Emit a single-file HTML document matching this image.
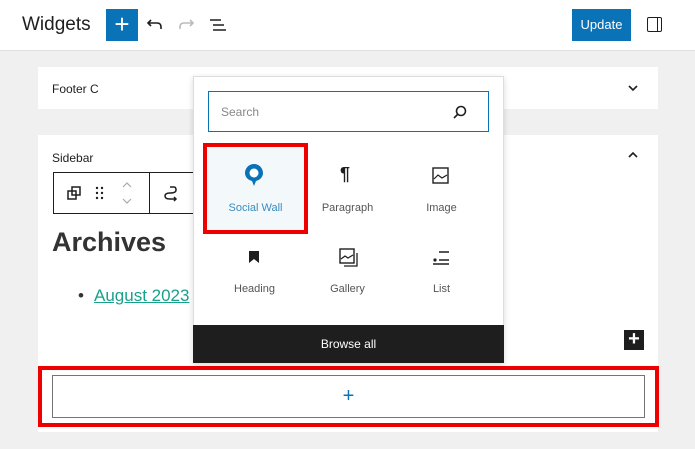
<!DOCTYPE html>
<html><head><style>
*{box-sizing:border-box;margin:0;padding:0}
body{width:695px;height:449px;background:#f0f0f0;font-family:"Liberation Sans",sans-serif;position:relative;overflow:hidden;color:#1e1e1e}
.a{position:absolute}
</style></head><body>
<div class="a" style="left:0;top:0;width:695px;height:51px;background:#fff;border-bottom:1px solid #e0e0e0"></div>
<div class="a" style="left:22px;top:14px;font-size:19px;">Widgets</div>
<div class="a" style="left:106px;top:9px;width:32px;height:32px;background:#0a72b7;color:#fff;font-size:26px;text-align:center;line-height:31px">+</div>
<svg class="a" style="left:145px;top:15px" width="20" height="20" viewBox="0 0 20 20"><path d="M6 5 L3 8 L6 11 M3 8 H12 Q16 8 16 12 V14" fill="none" stroke="#1e1e1e" stroke-width="1.6"/></svg>
<svg class="a" style="left:176px;top:15px" width="20" height="20" viewBox="0 0 20 20"><path d="M14 5 L17 8 L14 11 M17 8 H8 Q4 8 4 12 V14" fill="none" stroke="#bbb" stroke-width="1.6"/></svg>
<svg class="a" style="left:208px;top:15px" width="20" height="20" viewBox="0 0 20 20"><path d="M2 5H13M5 10H16M5 15H18" stroke="#1e1e1e" stroke-width="1.6"/></svg>
<div class="a" style="left:572px;top:9px;width:59px;height:32px;background:#0a72b7;color:#fff;font-size:13px;text-align:center;line-height:32px">Update</div>
<div class="a" style="left:647px;top:17px;width:15px;height:15px;border:1.5px solid #1e1e1e;border-radius:2px"><div style="position:absolute;right:3px;top:0;bottom:0;border-left:1.5px solid #1e1e1e"></div></div>

<div class="a" style="left:38px;top:67px;width:620px;height:42px;background:#fff"></div>
<div class="a" style="left:52px;top:82px;font-size:12px">Footer C</div>
<svg class="a" style="left:627px;top:83px" width="12" height="10"><path d="M2 3L6 7L10 3" fill="none" stroke="#1e1e1e" stroke-width="1.6"/></svg>

<div class="a" style="left:38px;top:135px;width:620px;height:297px;background:#fff"></div>
<div class="a" style="left:52px;top:151px;font-size:12px">Sidebar</div>
<svg class="a" style="left:627px;top:150px" width="12" height="10"><path d="M2 7L6 3L10 7" fill="none" stroke="#1e1e1e" stroke-width="1.6"/></svg>
<div class="a" style="left:53px;top:172px;width:145px;height:42px;border:1px solid #1e1e1e;background:#fff"></div>
<div class="a" style="left:149px;top:172px;height:42px;border-left:1px solid #1e1e1e"></div>
<svg class="a" style="left:66px;top:185px" width="16" height="16"><rect x="2" y="6" width="8" height="8" fill="none" stroke="#1e1e1e" stroke-width="1.5"/><rect x="6" y="2" width="8" height="8" fill="none" stroke="#1e1e1e" stroke-width="1.5"/></svg>
<svg class="a" style="left:94px;top:185px" width="12" height="16"><g fill="#1e1e1e"><circle cx="3" cy="3" r="1.2"/><circle cx="8" cy="3" r="1.2"/><circle cx="3" cy="8" r="1.2"/><circle cx="8" cy="8" r="1.2"/><circle cx="3" cy="13" r="1.2"/><circle cx="8" cy="13" r="1.2"/></g></svg>
<svg class="a" style="left:120px;top:180px" width="14" height="26"><path d="M3 7L7 3L11 7M3 19L7 23L11 19" fill="none" stroke="#aaa" stroke-width="1.2"/></svg>
<svg class="a" style="left:162px;top:184px" width="16" height="18"><path d="M8 3H12Q14 3 14 6Q14 9 8 9Q3 9 3 12Q3 15 8 15H14M12 13L14 15L12 17" fill="none" stroke="#1e1e1e" stroke-width="1.5"/></svg>
<div class="a" style="left:52px;top:227px;font-size:27px;font-weight:bold;color:#333">Archives</div>
<div class="a" style="left:78px;top:286px;font-size:17px;color:#333">•</div>
<div class="a" style="left:94px;top:286px;font-size:17px;color:#1aa18a;text-decoration:underline">August 2023</div>
<div class="a" style="left:624px;top:330px;width:20px;height:20px;background:#1e1e1e;color:#fff;font-size:20px;line-height:19px;text-align:center;font-weight:bold">+</div>

<div class="a" style="left:38px;top:366px;width:621px;height:61px;border:4px solid #e00;background:#fff"></div>
<div class="a" style="left:52px;top:375px;width:593px;height:43px;border:1px solid #757575;color:#0a72b7;font-size:20px;text-align:center;line-height:40px">+</div>

<div class="a" style="left:193px;top:76px;width:311px;height:287px;background:#fff;border:1px solid #ddd;box-shadow:0 2px 6px rgba(0,0,0,.15)"></div>
<div class="a" style="left:208px;top:91px;width:281px;height:41px;border:1.5px solid #0a72b7;font-size:12px;color:#888;padding:13px 12px">Search</div>
<svg class="a" style="left:452px;top:104px" width="16" height="16"><circle cx="9" cy="7" r="4.5" fill="none" stroke="#1e1e1e" stroke-width="1.6"/><path d="M6 10L2 14" stroke="#1e1e1e" stroke-width="1.6"/></svg>
<div class="a" style="left:203px;top:143px;width:105px;height:91px;border:4px solid #e00;background:#f3f8fb"></div>
<svg class="a" style="left:244px;top:163px" width="20" height="24"><path d="M10 1C5 1 1 5 1 10C1 14 4 17 8 18L10 23L12 18C16 17 19 14 19 10C19 5 15 1 10 1Z" fill="#0a72b7"/><circle cx="10" cy="10" r="4.5" fill="#fff"/></svg>
<div class="a" style="left:208px;top:202px;width:95px;text-align:center;font-size:11px;color:#3a8cbf">Social Wall</div>
<div class="a" style="left:340px;top:164px;font-size:18px;font-weight:bold">¶</div>
<div class="a" style="left:300px;top:202px;width:95px;text-align:center;font-size:11px;color:#555">Paragraph</div>
<svg class="a" style="left:432px;top:167px" width="18" height="18"><rect x="1" y="1" width="15" height="15" fill="none" stroke="#1e1e1e" stroke-width="1.4"/><path d="M2 12L6 8L10 11L15 8" fill="none" stroke="#1e1e1e" stroke-width="1.2"/></svg>
<div class="a" style="left:394px;top:202px;width:95px;text-align:center;font-size:11px;color:#555">Image</div>
<svg class="a" style="left:248px;top:250px" width="12" height="14"><path d="M1 1H11V13L6 9L1 13Z" fill="#1e1e1e"/></svg>
<div class="a" style="left:207px;top:283px;width:95px;text-align:center;font-size:11px;color:#555">Heading</div>
<svg class="a" style="left:339px;top:248px" width="20" height="20"><rect x="1" y="1" width="14" height="14" fill="none" stroke="#1e1e1e" stroke-width="1.4"/><path d="M2 11L6 8L9 10L14 7M18 5V18H5" fill="none" stroke="#1e1e1e" stroke-width="1.3"/></svg>
<div class="a" style="left:300px;top:283px;width:95px;text-align:center;font-size:11px;color:#555">Gallery</div>
<svg class="a" style="left:432px;top:249px" width="18" height="18"><path d="M7 3H17M7 11H17M1 15H17" stroke="#1e1e1e" stroke-width="1.4"/><circle cx="3" cy="11" r="1.6" fill="#1e1e1e"/></svg>
<div class="a" style="left:394px;top:283px;width:95px;text-align:center;font-size:11px;color:#555">List</div>
<div class="a" style="left:193px;top:325px;width:311px;height:38px;background:#1e1e1e;color:#fff;font-size:12px;text-align:center;line-height:38px">Browse all</div>
</body></html>
